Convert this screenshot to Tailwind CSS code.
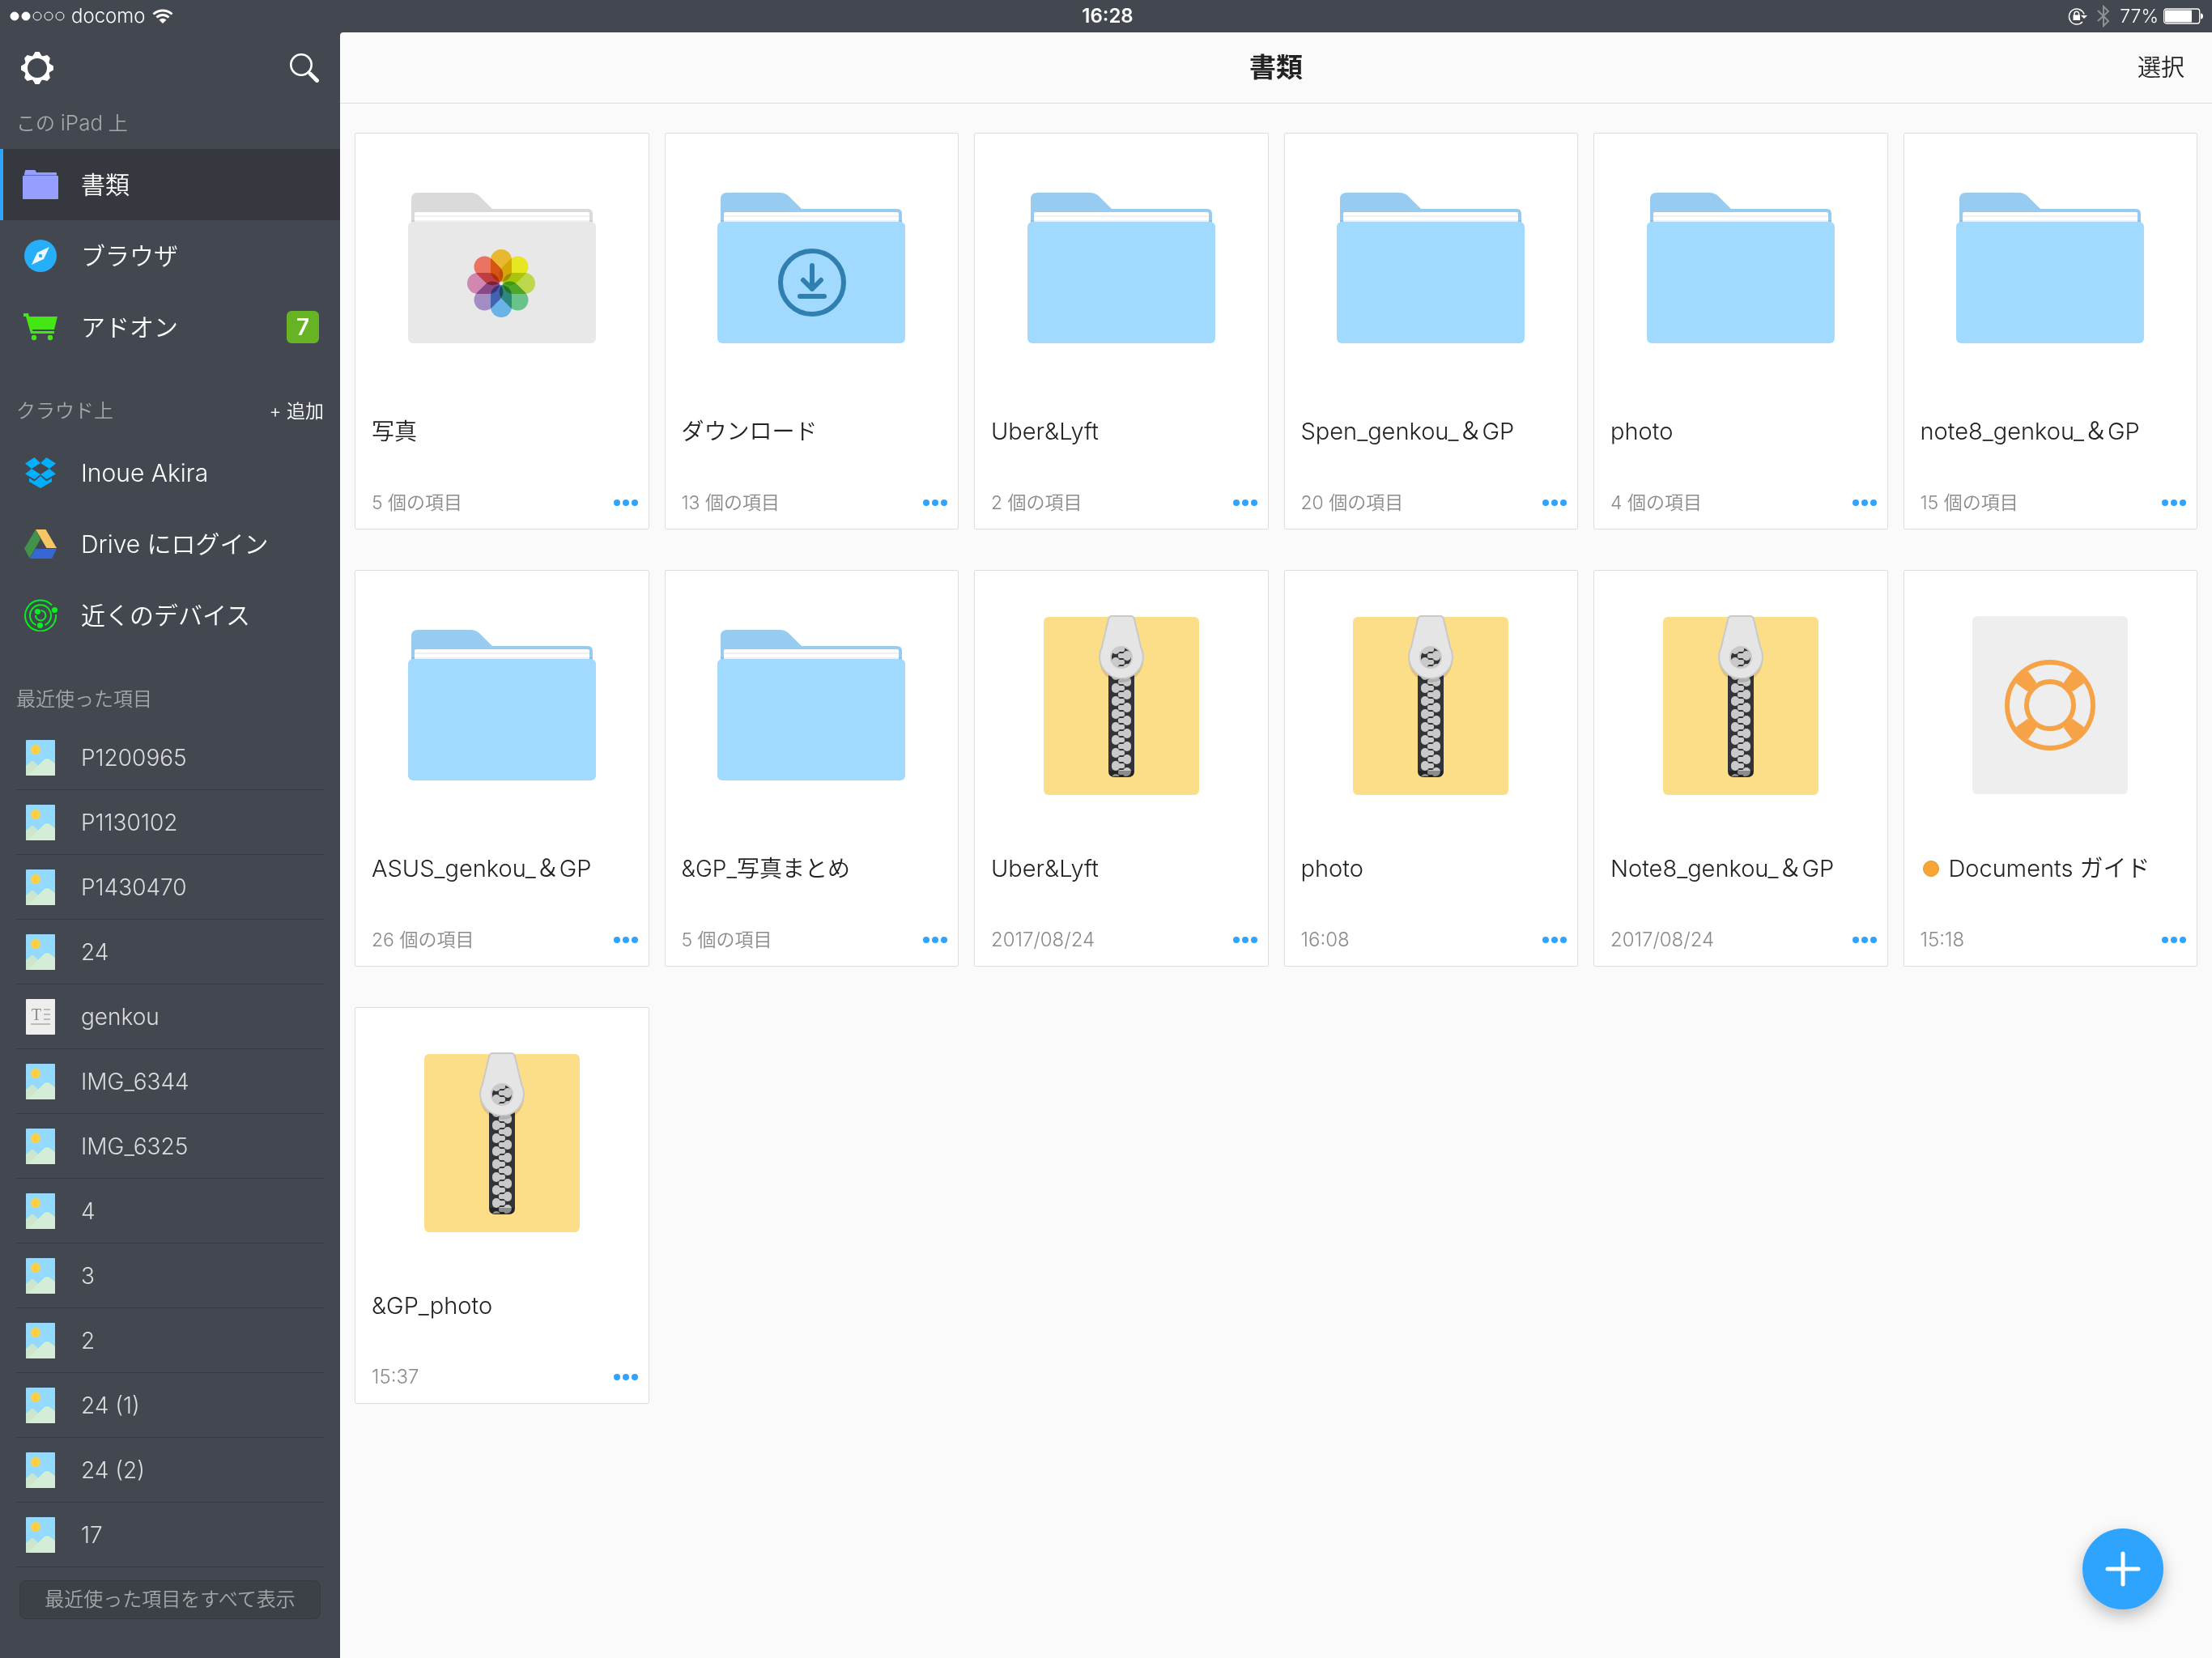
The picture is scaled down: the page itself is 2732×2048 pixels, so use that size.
<!DOCTYPE html>
<html lang="ja">
<head>
    <meta charset="utf-8" />
    <meta name="viewport" content="width=device-width, initial-scale=1.0" />
    <title>書類</title>
    <script src="https://cdn.jsdelivr.net/npm/@tailwindcss/browser@4"></script>
</head>
<body class="bg-[#43474f] font-['Inter','Noto_Sans_CJK_JP',sans-serif] font-[350] text-white">

    <!-- Shared icons -->
    <svg class="absolute size-0" aria-hidden="true">
        <symbol id="folder" viewBox="0 0 232 186">
            <path d="M4 40V8q0-8 8-8h65q7 0 12 5l15 15h118q6 0 6 6v14z" fill="currentColor"/>
            <path d="M4 40V8q0-8 8-8h65q7 0 12 5l15 15h118q6 0 6 6v14z" fill="#000" opacity=".06"/>
            <path d="M8 38V26q0-2 2-2h212q2 0 2 2v12z" fill="#fff"/>
            <path d="M8 28h216v2H8zM8 34h216v2H8z" fill="#f0f0f0"/>
            <path d="M4 34h4v2H4zM224 34h4v2h-4z" fill="#000" opacity=".06"/>
            <rect y="36" width="232" height="150" rx="6" fill="currentColor"/>
        </symbol>
        <pattern id="teeth" x="84" y="74" width="24" height="16" patternUnits="userSpaceOnUse">
            <rect width="24" height="16" fill="#323439"/>
            <g fill="#c9c9c9">
                <rect x="0" y="-6" width="10" height="12" rx="5"/>
                <rect x="4" y="-3" width="12" height="6" rx="2"/>
                <rect x="0" y="10" width="10" height="12" rx="5"/>
                <rect x="4" y="13" width="12" height="6" rx="2"/>
                <rect x="14" y="2" width="10" height="12" rx="5"/>
                <rect x="8" y="5" width="12" height="6" rx="2"/>
            </g>
        </pattern>
        <symbol id="zip" viewBox="0 0 192 222">
            <rect y="2" width="192" height="220" rx="6" fill="#fdde88"/>
            <path d="M80 38h32v154q0 8-8 8H88q-8 0-8-8z" fill="#323439"/>
            <path d="M84 38h24v154q0 7-7 7H84z" fill="url(#teeth)"/>
            <path d="M80 192h32q0 8-8 8H88q-8 0-8-8z" fill="#000" opacity=".3"/>
            <path d="M69 56a27 27 0 0 0 54 0a28 30 0 0 1-54 0z" fill="#000" opacity=".12"/>
            <path d="M84 1h24q3 0 4 4l8 34q3 6 3 12a27 27 0 0 1-54 0q0-6 3-12l8-34q1-4 4-4zM96 39a13 13 0 1 0 0 26a13 13 0 1 0 0-26z" fill="#e5e5e5" stroke="#c9c9c9" stroke-width="2" fill-rule="evenodd"/>
        </symbol>
        <symbol id="picture" viewBox="0 0 36 44">
            <rect width="36" height="44" rx="1" fill="#94daff"/>
            <circle cx="12" cy="12" r="6" fill="#ffd044"/>
            <path d="M0 32l6-5q2-2 4 0l6 6-10 11H0z" fill="#cbe8cf"/>
            <path d="M2 44L23 24q3-2 6 0l7 5v14q0 1-1 1z" fill="#d5ecd6"/>
        </symbol>
        <symbol id="dots" viewBox="0 0 30 8">
            <circle cx="4" cy="4" r="4"/><circle cx="15" cy="4" r="4"/><circle cx="26" cy="4" r="4"/>
        </symbol>
    </svg>

    <div class="flex min-h-screen flex-col">
        <!-- Status bar -->
        <div class="grid h-10 grid-cols-3 items-center text-[24px]">
            <div class="flex items-center gap-2 pl-3">
                <svg class="h-3 w-[68px]" viewBox="0 0 68 12" fill="none" stroke="#fff">
                    <circle cx="6" cy="6" r="5" fill="#fff"/><circle cx="20" cy="6" r="5" fill="#fff"/>
                    <circle cx="34" cy="6" r="5"/><circle cx="48" cy="6" r="5"/><circle cx="62" cy="6" r="5"/>
                </svg>
                <span>docomo</span>
                <svg class="h-[18px] w-[26px]" viewBox="0 0 26 18" fill="none" stroke="#fff" stroke-width="3">
                    <path d="M1.500 6.500a17 17 0 0 1 23 0M5.500 10.500a11 11 0 0 1 15 0"/>
                    <path d="M13 18l-4.500-4.500a7 7 0 0 1 9 0z" fill="#fff" stroke="none"/>
                </svg>
            </div>
            <div class="pl-1 text-center font-semibold">16:28</div>
            <div class="flex items-center justify-end pr-[10px]">
                <svg class="h-[22px] w-6" viewBox="0 0 24 22" fill="none" stroke="#fff" stroke-width="1.500">
                    <path d="M20 8.500a9.500 9.500 0 1 0-2 9.500"/>
                    <path d="M16 10h8l-4 4z" fill="#fff" stroke="none"/>
                    <rect x="6.500" y="9.500" width="8.500" height="6.500" fill="#fff" stroke="none"/>
                    <path d="M8 10V8a2.800 2.800 0 0 1 5.600 0v2"/>
                </svg>
                <svg class="ml-3 h-7 w-4" viewBox="0 0 16 28" fill="none" stroke="#8e9096" stroke-width="2">
                    <path d="M1 7l13 13-6 6V2l6 6L1 20"/>
                </svg>
                <span class="ml-3 text-[23px]">77%</span>
                <svg class="ml-[6px] h-[20px] w-[50px]" viewBox="0 0 50 20">
                    <rect x=".7" y="1" width="44" height="18" rx="3" fill="none" stroke="#fff" stroke-width="1.300"/>
                    <rect x="2" y="2.500" width="33" height="15" rx="1" fill="#fff"/>
                    <path d="M46 6.500q3 0 3 3.500t-3 3.500z" fill="#fff"/>
                </svg>
            </div>
        </div>

        <div class="flex flex-1">
            <!-- Sidebar -->
            <aside class="w-[420px] shrink-0">
                <div class="flex h-[88px] items-center justify-between pl-[26px] pr-[26px]">
                    <button type="button" aria-label="設定">
                        <svg class="size-10" viewBox="-20 -20 40 40">
                            <circle r="14" fill="none" stroke="#fff" stroke-width="4"/>
                            <g fill="#fff">
                                <path id="tooth" d="M-6-14L-2.500-20h5L6-14z"/>
                                <use href="#tooth" transform="rotate(45)"/><use href="#tooth" transform="rotate(90)"/>
                                <use href="#tooth" transform="rotate(135)"/><use href="#tooth" transform="rotate(180)"/>
                                <use href="#tooth" transform="rotate(225)"/><use href="#tooth" transform="rotate(270)"/>
                                <use href="#tooth" transform="rotate(315)"/>
                            </g>
                        </svg>
                    </button>
                    <button type="button" aria-label="検索">
                        <svg class="size-9" viewBox="0 0 36 36" fill="none" stroke="#fff" stroke-linecap="round">
                            <circle cx="14" cy="14" r="12.700" stroke-width="2.600"/>
                            <path d="M23 23L25 25" stroke-width="3"/>
                            <path d="M25.500 25.500L33.500 33.500" stroke-width="5"/>
                        </svg>
                    </button>
                </div>

                <h2 class="h-14 px-5 pt-1 text-[24px] leading-10 text-[#a5a7aa]">この <span class="text-[26px]">iPad</span> 上</h2>
                <nav class="text-[30px]">
                    <a href="#" class="flex h-[88px] items-center gap-7 border-l-4 border-[#2fa4ff] bg-[#36383f] pl-6">
                        <svg class="h-9 w-11" viewBox="0 0 44 36" fill="#959fff">
                            <path d="M2 8V5l1-4q0-1 1-1h11q1 0 2 3h24q1 0 1 1v4z"/>
                            <path d="M2 6h40v1H2z" fill="#5f6bd0"/>
                            <rect y="7" width="44" height="29" rx="1"/>
                        </svg>
                        <span>書類</span>
                    </a>
                    <a href="#" class="flex h-[88px] items-center gap-7 pl-7">
                        <svg class="h-10 w-11" viewBox="0 0 44 40">
                            <circle cx="22" cy="20" r="20" fill="#27aef8"/>
                            <path d="M33 9L26 24L11 31L18 16z" fill="#eef8ff"/>
                            <circle cx="22" cy="20" r="2.200" fill="#27aef8"/>
                        </svg>
                        <span>ブラウザ</span>
                    </a>
                    <a href="#" class="flex h-[88px] items-center gap-7 pl-7 pr-[26px]">
                        <svg class="h-[34px] w-11" viewBox="0 0 44 34" fill="#44e616">
                            <path d="M1 0h6l1 4h35l-4 16H12l.5 2h26.500v3H10L4 4H1z"/>
                            <circle cx="14" cy="30" r="3.200"/><circle cx="34" cy="30" r="3.200"/>
                        </svg>
                        <span>アドオン</span>
                        <span class="ml-auto flex size-10 items-center justify-center rounded-md bg-[#66b323] text-[28px] font-semibold">7</span>
                    </a>
                </nav>

                <div class="flex h-[92px] items-center justify-between px-5 pt-7">
                    <h2 class="text-[24px] text-[#a5a7aa]">クラウド上</h2>
                    <button type="button" class="text-[23px]">+ 追加</button>
                </div>
                <nav class="text-[30px]">
                    <a href="#" class="flex h-[88px] items-center gap-7 pl-7">
                        <svg class="h-[38px] w-11" viewBox="0 0 44 38" fill="#00b0ff">
                            <path d="M14.500 0L22 7L11 14L3 7.500zM29.500 0L22 7L33 14L41 7.500zM3 20.500L11 14L22 21L14.500 27zM41 20.500L33 14L22 21L29.500 27z"/>
                            <path d="M8 25.500l6.500 4L22 23l7.500 6.500 6.500-4V30l-14 8L8 30z"/>
                        </svg>
                        <span>Inoue Akira</span>
                    </a>
                    <a href="#" class="flex h-[88px] items-center gap-7 pl-7">
                        <svg class="h-9 w-11" viewBox="0 0 44 36">
                            <path d="M16 0l6 12L8.500 35.500 2 23.500z" fill="#41924b"/>
                            <path d="M16 0h12.500L42 23H29.500z" fill="#f6c564"/>
                            <path d="M15.500 24H42l-6 12H9z" fill="#3767d4"/>
                        </svg>
                        <span>Drive にログイン</span>
                    </a>
                    <a href="#" class="flex h-[88px] items-center gap-7 pl-7">
                        <svg class="h-10 w-11" viewBox="0 0 44 40" fill="none" stroke="#06ef1e" stroke-width="2">
                            <path d="M36 7.500a19 19 0 1 0 5 11.500"/>
                            <path d="M27.500 32a13 13 0 1 0-11 0"/>
                            <path d="M22.500 14a6.200 6.200 0 1 1-6.500 6"/>
                            <g fill="#06ef1e" stroke="none">
                                <circle cx="39.500" cy="13.500" r="3.600"/><circle cx="18.500" cy="15.500" r="3.600"/><circle cx="21.500" cy="32.500" r="3.600"/>
                            </g>
                        </svg>
                        <span>近くのデバイス</span>
                    </a>
                </nav>

                <h2 class="flex h-[92px] items-center px-5 pt-7 text-[24px] text-[#a5a7aa]">最近使った項目</h2>
                <ul class="mx-5 text-[28px] text-[#dcdcdd]">
                    <li class="border-b border-[#373a41]"><a href="#" class="flex h-[79px] items-center gap-8 pt-px pl-3"><svg class="h-11 w-9"><use href="#picture"/></svg>P1200965</a></li>
                    <li class="border-b border-[#373a41]"><a href="#" class="flex h-[79px] items-center gap-8 pt-px pl-3"><svg class="h-11 w-9"><use href="#picture"/></svg>P1130102</a></li>
                    <li class="border-b border-[#373a41]"><a href="#" class="flex h-[79px] items-center gap-8 pt-px pl-3"><svg class="h-11 w-9"><use href="#picture"/></svg>P1430470</a></li>
                    <li class="border-b border-[#373a41]"><a href="#" class="flex h-[79px] items-center gap-8 pt-px pl-3"><svg class="h-11 w-9"><use href="#picture"/></svg>24</a></li>
                    <li class="border-b border-[#373a41]">
                        <a href="#" class="flex h-[79px] items-center gap-8 pt-px pl-3">
                            <svg class="h-11 w-9" viewBox="0 0 36 44" aria-hidden="true">
                                <rect width="36" height="44" rx="1" fill="#eee"/>
                                <text x="13" y="26" text-anchor="middle" font-family="Liberation Serif, serif" font-size="20" fill="#8a8a8a">T</text>
                                <path d="M22 12h8v2h-8zM22 18h8v2h-8zM22 24h8v2h-8zM6 30h24v2H6z" fill="#bbb"/>
                            </svg>
                            genkou
                        </a>
                    </li>
                    <li class="border-b border-[#373a41]"><a href="#" class="flex h-[79px] items-center gap-8 pt-px pl-3"><svg class="h-11 w-9"><use href="#picture"/></svg>IMG_6344</a></li>
                    <li class="border-b border-[#373a41]"><a href="#" class="flex h-[79px] items-center gap-8 pt-px pl-3"><svg class="h-11 w-9"><use href="#picture"/></svg>IMG_6325</a></li>
                    <li class="border-b border-[#373a41]"><a href="#" class="flex h-[79px] items-center gap-8 pt-px pl-3"><svg class="h-11 w-9"><use href="#picture"/></svg>4</a></li>
                    <li class="border-b border-[#373a41]"><a href="#" class="flex h-[79px] items-center gap-8 pt-px pl-3"><svg class="h-11 w-9"><use href="#picture"/></svg>3</a></li>
                    <li class="border-b border-[#373a41]"><a href="#" class="flex h-[79px] items-center gap-8 pt-px pl-3"><svg class="h-11 w-9"><use href="#picture"/></svg>2</a></li>
                    <li class="border-b border-[#373a41]"><a href="#" class="flex h-[79px] items-center gap-8 pt-px pl-3"><svg class="h-11 w-9"><use href="#picture"/></svg>24 (1)</a></li>
                    <li class="border-b border-[#373a41]"><a href="#" class="flex h-[79px] items-center gap-8 pt-px pl-3"><svg class="h-11 w-9"><use href="#picture"/></svg>24 (2)</a></li>
                    <li class="border-b border-[#373a41]"><a href="#" class="flex h-[79px] items-center gap-8 pt-px pl-3"><svg class="h-11 w-9"><use href="#picture"/></svg>17</a></li>
                </ul>
                <div class="px-6 pt-4 pb-12">
                    <button type="button" class="h-12 w-full rounded-lg border border-[#373a41] bg-[#3c4047] text-[24px] leading-none text-[#a5a7aa]">最近使った項目をすべて表示</button>
                </div>
            </aside>

            <!-- Main content -->
            <main class="min-w-0 flex-1 rounded-tl bg-[#fafafa] text-[#222]">
                <header class="grid h-[88px] grid-cols-3 items-center border-b border-[#dedede] px-[34px]">
                    <h1 class="col-start-2 text-center text-[33px] font-bold">書類</h1>
                    <button type="button" class="justify-self-end text-[29px]">選択</button>
                </header>

                <div class="grid grid-cols-6 gap-x-[19px] gap-y-[50px] px-[18px] py-9">
                    <article class="flex h-[490px] flex-col rounded-xs border border-[#dedede] bg-white">
                        <div class="flex h-[332px] items-center justify-center">
                            <svg class="h-[186px] w-[232px] text-[#e8e8e8]" viewBox="0 0 232 186">
                                <use href="#folder" width="232" height="186"/>
                                <g class="isolate" transform="translate(115 112)">
                                    <rect class="mix-blend-multiply" x="-13" y="-42" width="26" height="40" rx="13" fill="#e9b830"/>
                                    <rect class="mix-blend-multiply" x="-13" y="-42" width="26" height="40" rx="13" fill="#e6e720" transform="rotate(45)"/>
                                    <rect class="mix-blend-multiply" x="-13" y="-42" width="26" height="40" rx="13" fill="#bcd94e" transform="rotate(90)"/>
                                    <rect class="mix-blend-multiply" x="-13" y="-42" width="26" height="40" rx="13" fill="#69c28a" transform="rotate(135)"/>
                                    <rect class="mix-blend-multiply" x="-13" y="-42" width="26" height="40" rx="13" fill="#6ab3e6" transform="rotate(180)"/>
                                    <rect class="mix-blend-multiply" x="-13" y="-42" width="26" height="40" rx="13" fill="#a38dc2" transform="rotate(225)"/>
                                    <rect class="mix-blend-multiply" x="-13" y="-42" width="26" height="40" rx="13" fill="#d287b1" transform="rotate(270)"/>
                                    <rect class="mix-blend-multiply" x="-13" y="-42" width="26" height="40" rx="13" fill="#ea7362" transform="rotate(315)"/>
                                </g>
                            </svg>
                        </div>
                        <h3 class="truncate px-5 pt-4 text-[28px] leading-10">写真</h3>
                        <div class="mt-auto flex h-16 items-center justify-between pl-5 pr-[13px] text-[23px] text-[#8a8a8a]">
                            <span>5 個の項目</span>
                            <button type="button" aria-label="メニュー"><svg class="h-2 w-[30px] fill-[#2fa4ff]"><use href="#dots"/></svg></button>
                        </div>
                    </article>
                    <article class="flex h-[490px] flex-col rounded-xs border border-[#dedede] bg-white">
                        <div class="flex h-[332px] items-center justify-center">
                            <svg class="h-[186px] w-[232px] text-[#a1d9ff]" viewBox="0 0 232 186">
                                <use href="#folder" width="232" height="186"/>
                                <g fill="none" stroke="#2f80b0" stroke-width="6" stroke-linecap="round" stroke-linejoin="round">
                                    <circle cx="117" cy="111" r="39"/>
                                    <path d="M117 90v29M106 108l11 11 11-11M102 128h30"/>
                                </g>
                            </svg>
                        </div>
                        <h3 class="truncate px-5 pt-4 text-[28px] leading-10">ダウンロード</h3>
                        <div class="mt-auto flex h-16 items-center justify-between pl-5 pr-[13px] text-[23px] text-[#8a8a8a]">
                            <span>13 個の項目</span>
                            <button type="button" aria-label="メニュー"><svg class="h-2 w-[30px] fill-[#2fa4ff]"><use href="#dots"/></svg></button>
                        </div>
                    </article>
                    <article class="flex h-[490px] flex-col rounded-xs border border-[#dedede] bg-white">
                        <div class="flex h-[332px] items-center justify-center">
                            <svg class="h-[186px] w-[232px] text-[#a1d9ff]"><use href="#folder"/></svg>
                        </div>
                        <h3 class="truncate px-5 pt-4 text-[29px] leading-10">Uber&amp;Lyft</h3>
                        <div class="mt-auto flex h-16 items-center justify-between pl-5 pr-[13px] text-[23px] text-[#8a8a8a]">
                            <span>2 個の項目</span>
                            <button type="button" aria-label="メニュー"><svg class="h-2 w-[30px] fill-[#2fa4ff]"><use href="#dots"/></svg></button>
                        </div>
                    </article>
                    <article class="flex h-[490px] flex-col rounded-xs border border-[#dedede] bg-white">
                        <div class="flex h-[332px] items-center justify-center">
                            <svg class="h-[186px] w-[232px] text-[#a1d9ff]"><use href="#folder"/></svg>
                        </div>
                        <h3 class="truncate px-5 pt-4 text-[29px] leading-10">Spen_genkou_＆GP</h3>
                        <div class="mt-auto flex h-16 items-center justify-between pl-5 pr-[13px] text-[23px] text-[#8a8a8a]">
                            <span>20 個の項目</span>
                            <button type="button" aria-label="メニュー"><svg class="h-2 w-[30px] fill-[#2fa4ff]"><use href="#dots"/></svg></button>
                        </div>
                    </article>
                    <article class="flex h-[490px] flex-col rounded-xs border border-[#dedede] bg-white">
                        <div class="flex h-[332px] items-center justify-center">
                            <svg class="h-[186px] w-[232px] text-[#a1d9ff]"><use href="#folder"/></svg>
                        </div>
                        <h3 class="truncate px-5 pt-4 text-[29px] leading-10">photo</h3>
                        <div class="mt-auto flex h-16 items-center justify-between pl-5 pr-[13px] text-[23px] text-[#8a8a8a]">
                            <span>4 個の項目</span>
                            <button type="button" aria-label="メニュー"><svg class="h-2 w-[30px] fill-[#2fa4ff]"><use href="#dots"/></svg></button>
                        </div>
                    </article>
                    <article class="flex h-[490px] flex-col rounded-xs border border-[#dedede] bg-white">
                        <div class="flex h-[332px] items-center justify-center">
                            <svg class="h-[186px] w-[232px] text-[#a1d9ff]"><use href="#folder"/></svg>
                        </div>
                        <h3 class="truncate px-5 pt-4 text-[29px] leading-10">note8_genkou_＆GP</h3>
                        <div class="mt-auto flex h-16 items-center justify-between pl-5 pr-[13px] text-[23px] text-[#8a8a8a]">
                            <span>15 個の項目</span>
                            <button type="button" aria-label="メニュー"><svg class="h-2 w-[30px] fill-[#2fa4ff]"><use href="#dots"/></svg></button>
                        </div>
                    </article>

                    <article class="flex h-[490px] flex-col rounded-xs border border-[#dedede] bg-white">
                        <div class="flex h-[332px] items-center justify-center">
                            <svg class="h-[186px] w-[232px] text-[#a1d9ff]"><use href="#folder"/></svg>
                        </div>
                        <h3 class="truncate px-5 pt-4 text-[29px] leading-10">ASUS_genkou_＆GP</h3>
                        <div class="mt-auto flex h-16 items-center justify-between pl-5 pr-[13px] text-[23px] text-[#8a8a8a]">
                            <span>26 個の項目</span>
                            <button type="button" aria-label="メニュー"><svg class="h-2 w-[30px] fill-[#2fa4ff]"><use href="#dots"/></svg></button>
                        </div>
                    </article>
                    <article class="flex h-[490px] flex-col rounded-xs border border-[#dedede] bg-white">
                        <div class="flex h-[332px] items-center justify-center">
                            <svg class="h-[186px] w-[232px] text-[#a1d9ff]"><use href="#folder"/></svg>
                        </div>
                        <h3 class="truncate px-5 pt-4 text-[28px] leading-10">&amp;GP_写真まとめ</h3>
                        <div class="mt-auto flex h-16 items-center justify-between pl-5 pr-[13px] text-[23px] text-[#8a8a8a]">
                            <span>5 個の項目</span>
                            <button type="button" aria-label="メニュー"><svg class="h-2 w-[30px] fill-[#2fa4ff]"><use href="#dots"/></svg></button>
                        </div>
                    </article>
                    <article class="flex h-[490px] flex-col rounded-xs border border-[#dedede] bg-white">
                        <div class="flex h-[332px] items-center justify-center">
                            <svg class="h-[222px] w-48"><use href="#zip"/></svg>
                        </div>
                        <h3 class="truncate px-5 pt-4 text-[29px] leading-10">Uber&amp;Lyft</h3>
                        <div class="mt-auto flex h-16 items-center justify-between pl-5 pr-[13px] text-[24px] text-[#8a8a8a]">
                            <span>2017/08/24</span>
                            <button type="button" aria-label="メニュー"><svg class="h-2 w-[30px] fill-[#2fa4ff]"><use href="#dots"/></svg></button>
                        </div>
                    </article>
                    <article class="flex h-[490px] flex-col rounded-xs border border-[#dedede] bg-white">
                        <div class="flex h-[332px] items-center justify-center">
                            <svg class="h-[222px] w-48"><use href="#zip"/></svg>
                        </div>
                        <h3 class="truncate px-5 pt-4 text-[29px] leading-10">photo</h3>
                        <div class="mt-auto flex h-16 items-center justify-between pl-5 pr-[13px] text-[24px] text-[#8a8a8a]">
                            <span>16:08</span>
                            <button type="button" aria-label="メニュー"><svg class="h-2 w-[30px] fill-[#2fa4ff]"><use href="#dots"/></svg></button>
                        </div>
                    </article>
                    <article class="flex h-[490px] flex-col rounded-xs border border-[#dedede] bg-white">
                        <div class="flex h-[332px] items-center justify-center">
                            <svg class="h-[222px] w-48"><use href="#zip"/></svg>
                        </div>
                        <h3 class="truncate px-5 pt-4 text-[29px] leading-10">Note8_genkou_＆GP</h3>
                        <div class="mt-auto flex h-16 items-center justify-between pl-5 pr-[13px] text-[24px] text-[#8a8a8a]">
                            <span>2017/08/24</span>
                            <button type="button" aria-label="メニュー"><svg class="h-2 w-[30px] fill-[#2fa4ff]"><use href="#dots"/></svg></button>
                        </div>
                    </article>
                    <article class="flex h-[490px] flex-col rounded-xs border border-[#dedede] bg-white">
                        <div class="flex h-[332px] items-center justify-center">
                            <svg class="h-[220px] w-48" viewBox="0 0 192 220">
                                <rect width="192" height="220" rx="6" fill="#eee"/>
                                <g transform="translate(96 110)" fill="none" stroke="#f6a347" stroke-width="6">
                                    <circle r="53"/>
                                    <circle r="29"/>
                                    <g fill="#f6a347" stroke="none">
                                        <path id="strap" d="M-27-42L-17-28-22-20-28-17-42-27-37-36z"/>
                                        <use href="#strap" transform="rotate(90)"/>
                                        <use href="#strap" transform="rotate(180)"/>
                                        <use href="#strap" transform="rotate(270)"/>
                                    </g>
                                </g>
                            </svg>
                        </div>
                        <h3 class="flex items-center gap-3 px-5 pt-4 text-[29px] leading-10">
                            <span class="ml-[3px] size-5 shrink-0 rounded-full border border-[#de9630] bg-[#f7a633]"></span>
                            <span class="truncate">Documents ガイド</span>
                        </h3>
                        <div class="mt-auto flex h-16 items-center justify-between pl-5 pr-[13px] text-[24px] text-[#8a8a8a]">
                            <span>15:18</span>
                            <button type="button" aria-label="メニュー"><svg class="h-2 w-[30px] fill-[#2fa4ff]"><use href="#dots"/></svg></button>
                        </div>
                    </article>

                    <article class="flex h-[490px] flex-col rounded-xs border border-[#dedede] bg-white">
                        <div class="flex h-[332px] items-center justify-center">
                            <svg class="h-[222px] w-48"><use href="#zip"/></svg>
                        </div>
                        <h3 class="truncate px-5 pt-4 text-[29px] leading-10">&amp;GP_photo</h3>
                        <div class="mt-auto flex h-16 items-center justify-between pl-5 pr-[13px] text-[24px] text-[#8a8a8a]">
                            <span>15:37</span>
                            <button type="button" aria-label="メニュー"><svg class="h-2 w-[30px] fill-[#2fa4ff]"><use href="#dots"/></svg></button>
                        </div>
                    </article>
                </div>
            </main>
        </div>
    </div>

    <!-- Add button -->
    <button type="button" aria-label="追加" class="fixed right-[60px] bottom-[60px] flex size-[100px] items-center justify-center rounded-full bg-[#2fa4ff] shadow-[0_8px_20px_rgb(0_0_0/0.25)]">
        <svg class="size-11" viewBox="0 0 44 44" stroke="#fff" stroke-width="5" stroke-linecap="round"><path d="M22 3v38M3 22h38"/></svg>
    </button>

</body>
</html>
